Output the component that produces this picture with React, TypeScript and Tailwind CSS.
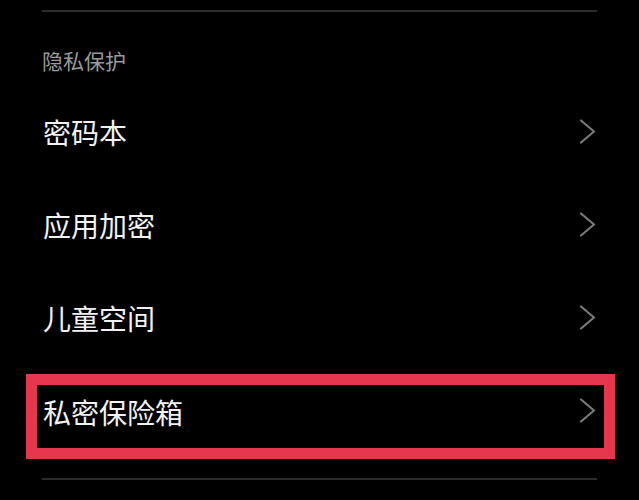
const rows = ["密码本", "应用加密", "儿童空间", "私密保险箱"];

function Chevron() {
  return (
    <svg width="17" height="25" viewBox="0 0 17 25" fill="none" className="shrink-0">
      <path d="M2 1.5 L15 12.5 L2 23.5" stroke="#7a7a7a" strokeWidth="2.2" strokeLinecap="round" strokeLinejoin="round" />
    </svg>
  );
}

export default function App() {
  return (
    <div
      className="w-[639px] h-[500px] bg-black overflow-hidden"
      style={{ fontFamily: '"Noto Sans CJK SC", "Noto Sans", sans-serif' }}
    >
      <div className="px-[42px] pt-[10px]">
        <div className="h-[2px] bg-[#2c2c2c]" />

        <div className="h-[73px] pt-[38px]">
          <span className="text-[21px] leading-none text-[#9a9a9a] block">隐私保护</span>
        </div>

        {rows.map((label, i) => (
          <div key={label} className="relative h-[93px] flex items-center justify-between pl-[1px]">
            <span className={`text-[28px] leading-none text-[#f2f2f2] ${i === 3 ? "pt-[2px]" : ""}`}>{label}</span>
            <div className="pr-[1px]">
              <Chevron />
            </div>
            {i === 3 && (
              <div className="absolute left-[-16px] right-[-18px] top-[10px] bottom-[-2px] border-[11px] border-[#e6374e] pointer-events-none" />
            )}
          </div>
        ))}

        <div className="mt-[21px] h-[2px] bg-[#2c2c2c]" />
      </div>
    </div>
  );
}
